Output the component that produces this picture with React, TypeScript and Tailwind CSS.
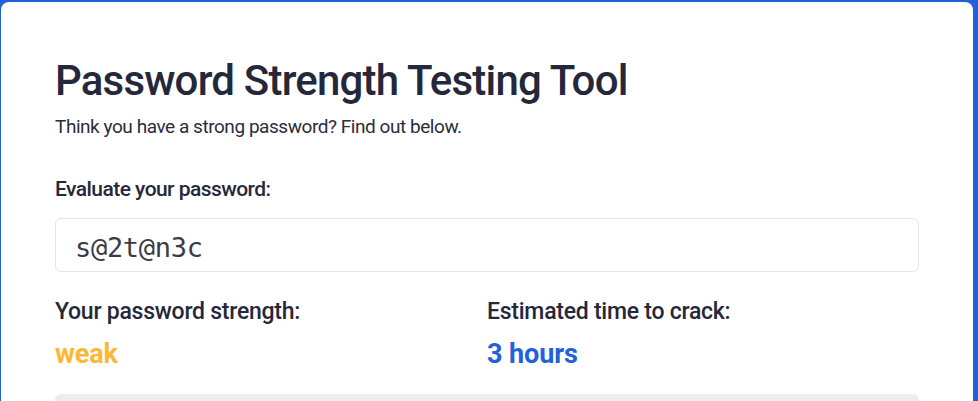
export default function App() {
  return (
    <div className="w-[978px] h-[401px] overflow-hidden bg-[#2162da] pt-[2px] pl-[1px] pr-[5px]" style={{ fontFamily: 'Roboto, "Liberation Sans", sans-serif' }}>
      <div className="h-[399px] bg-white rounded-t-[8px] px-[54px] pt-[54px]">
        <h1 className="text-[42px] leading-[50px] font-medium tracking-[-0.8px] text-[#25273a]">Password Strength Testing Tool</h1>
        <p className="mt-[9px] text-[19px] leading-[24px] tracking-[-0.45px] text-[#2b2d3c]">Think you have a strong password? Find out below.</p>
        <div className="mt-[37px] text-[21px] leading-[26px] font-medium tracking-[-0.55px] text-[#25273a]">Evaluate your password:</div>
        <div className="mt-[16px] h-[54px] border border-[#e3e3ea] rounded-[6px] flex items-center pt-[5px] px-[19px]">
          <span className="text-[27px] leading-[32px] tracking-[-0.3px] text-[#3a3b46]" style={{ fontFamily: '"DejaVu Sans Mono", monospace' }}>s@2t@n3c</span>
        </div>
        <div className="mt-[26px] grid grid-cols-2">
          <div>
            <div className="text-[23px] leading-[28px] font-medium tracking-[-0.25px] text-[#25273a]">Your password strength:</div>
            <div className="mt-[12px] text-[27px] leading-[32px] font-bold tracking-[-0.1px] text-[#fbb834]">weak</div>
          </div>
          <div>
            <div className="text-[23px] leading-[28px] font-medium tracking-[-0.25px] text-[#25273a]">Estimated time to crack:</div>
            <div className="mt-[12px] text-[27px] leading-[32px] font-bold tracking-[-0.1px] text-[#2162da]">3 hours</div>
          </div>
        </div>
        <div className="mt-[24px] h-[40px] bg-[#ececf1] rounded-t-[6px]" />
      </div>
    </div>
  );
}
